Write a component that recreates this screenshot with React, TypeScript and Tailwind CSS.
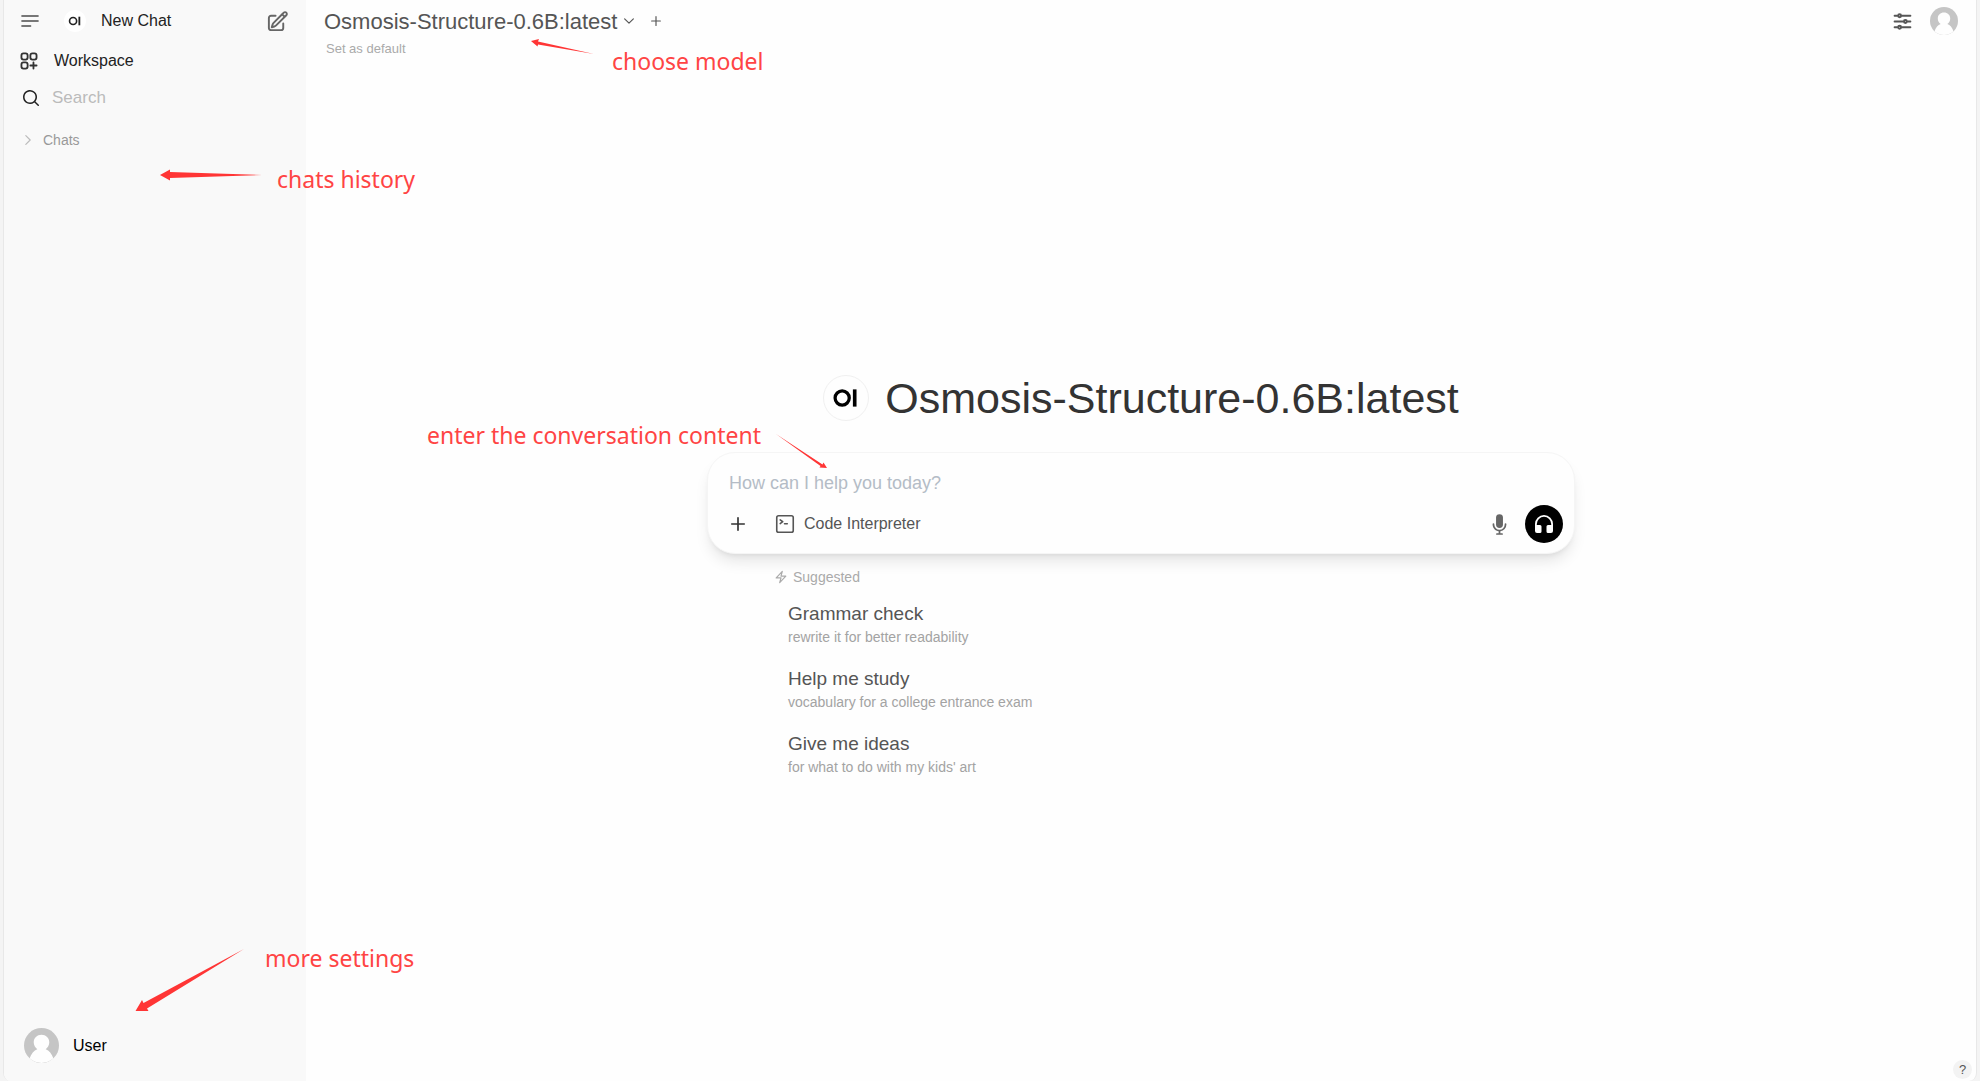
import React from 'react';

const suggestions = [
   { title: 'Grammar check', text: 'rewrite it for better readability' },
   { title: 'Help me study', text: 'vocabulary for a college entrance exam' },
   { title: 'Give me ideas', text: "for what to do with my kids' art" },
];

function Outline({ d, className, width = 2 }: { d: string; className: string; width?: number }) {
   return (
      <svg viewBox="0 0 24 24" fill="none" stroke="currentColor" strokeWidth={width} strokeLinecap="round" strokeLinejoin="round" className={className} aria-hidden="true">
         <path d={d} />
      </svg>
   );
}

function Logo({ className }: { className: string }) {
   return (
      <svg viewBox="0 0 46 46" className={className} aria-hidden="true">
         <circle cx="19" cy="23" r="7.4" fill="none" stroke="currentColor" strokeWidth="3.4" />
         <rect x="30.2" y="14" width="3.8" height="18" fill="currentColor" />
      </svg>
   );
}

function Avatar({ className }: { className: string }) {
   return (
      <svg viewBox="0 0 36 36" className={className} aria-hidden="true">
         <circle cx="18" cy="18" r="18" fill="#c5c5c5" />
         <path d="M18 7c4.500 0 8 3.300 8 7.700 0 3-1.500 5.600-3.700 7.100 3.500 1.200 6.300 4.600 7.900 9.400A18 18 0 0 1 18 36a18 18 0 0 1-12.200-4.800c1.600-4.800 4.400-8.200 7.900-9.400C11.500 20.300 10 17.700 10 14.700 10 10.300 13.500 7 18 7Z" fill="#fefefe" />
      </svg>
   );
}

function Sidebar() {
   return (
      <aside className="w-[302px] shrink-0 bg-[#f9f9f9] flex flex-col text-[#222]">
         <div className="flex items-center h-[42px] pl-4 pr-[17px]">
            <button aria-label="Toggle sidebar" className="text-[#777]">
               <Outline d="M2.500 6h19M2.500 12h19M2.500 18h10" width={2.25} className="w-[20px] h-[20px]" />
            </button>
            <a href="#new" className="flex flex-1 items-center ml-6 gap-[15px] text-[16px] font-medium">
               <span className="w-[22px] h-[22px] rounded-full bg-white"><Logo className="w-[22px] h-[22px]" /></span>
               New Chat
            </a>
            <button aria-label="New chat" className="text-[#666]">
               <Outline d="m16.862 4.487 1.687-1.688a1.875 1.875 0 1 1 2.652 2.652L10.582 16.070a4.500 4.500 0 0 1-1.897 1.130L6 18l.8-2.685a4.500 4.500 0 0 1 1.130-1.897l8.932-8.931Zm0 0L19.500 7.125M18 14v4.750A2.250 2.250 0 0 1 15.750 21H5.250A2.250 2.250 0 0 1 3 18.750V8.250A2.250 2.250 0 0 1 5.250 6H10" className="w-[23px] h-[23px]" />
            </button>
         </div>
         <a href="#workspace" className="flex items-center h-[38px] pl-[14px] gap-[14px] text-[16px] font-medium">
            <Outline d="M13.500 16.875h3.375m0 0h3.375m-3.375 0V13.500m0 3.375v3.375M6 10.500h2.250a2.250 2.250 0 0 0 2.250-2.250V6a2.250 2.250 0 0 0-2.250-2.250H6A2.250 2.250 0 0 0 3.750 6v2.250A2.250 2.250 0 0 0 6 10.500Zm0 9.750h2.250A2.250 2.250 0 0 0 10.500 18v-2.250a2.250 2.250 0 0 0-2.250-2.250H6a2.250 2.250 0 0 0-2.250 2.250V18A2.250 2.250 0 0 0 6 20.250Zm9.750-9.750H18a2.250 2.250 0 0 0 2.250-2.250V6A2.250 2.250 0 0 0 18 3.750h-2.250A2.250 2.250 0 0 0 13.500 6v2.250a2.250 2.250 0 0 0 2.250 2.250Z" className="w-[22px] h-[22px] text-[#333]" />
            Workspace
         </a>
         <label className="flex items-center h-[36px] pl-[17px] pr-4 gap-[11px]">
            <svg viewBox="0 0 20 20" fill="currentColor" className="w-[20px] h-[20px] shrink-0" aria-hidden="true">
               <path fillRule="evenodd" clipRule="evenodd" d="M9 3.500a5.500 5.500 0 1 0 0 11 5.500 5.500 0 0 0 0-11zM2 9a7 7 0 1 1 12.452 4.391l3.328 3.329a.75.75 0 1 1-1.060 1.060l-3.329-3.328A7 7 0 0 1 2 9z" />
            </svg>
            <input type="text" aria-label="Search" placeholder="Search" className="w-full min-w-0 bg-transparent outline-none text-[17px] placeholder:text-[#bbb]" />
         </label>
         <button className="flex items-center h-[32px] mt-2 pl-[17px] gap-2 text-[14px] font-medium text-[#999]">
            <Outline d="m8.250 4.500 7.500 7.500-7.500 7.500" className="w-[14px] h-[14px] text-[#bbb]" />
            Chats
         </button>
         <button className="flex items-center mt-auto mb-[18px] pl-5 gap-[14px] text-[16px] font-medium text-black">
            <Avatar className="w-[35px] h-[35px]" />
            User
         </button>
      </aside>
   );
}

function Header() {
   return (
      <header className="flex justify-between items-start h-[64px] px-[18px]">
         <div>
            <div className="flex items-center h-[42px] text-[#555]">
               <button className="flex items-center gap-[5px] text-[22px]">
                  Osmosis-Structure-0.6B:latest
                  <Outline d="m19.500 8.250-7.500 7.500-7.500-7.500" className="w-[14px] h-[14px]" />
               </button>
               <button aria-label="Add model" className="ml-[13px]"><Outline d="M12 4.500v15m7.500-7.500h-15" className="w-[14px] h-[14px]" /></button>
            </div>
            <button className="block pl-[2px] text-[13px] leading-[14px] text-[#aaa]">Set as default</button>
         </div>
         <div className="flex items-center gap-4 h-[42px]">
            <button aria-label="Controls" className="text-[#555]">
               <Outline d="M10.500 6h9.750M10.500 6a1.500 1.500 0 1 1-3 0m3 0a1.500 1.500 0 1 0-3 0M3.750 6H7.500m3 12h9.750m-9.750 0a1.500 1.500 0 0 1-3 0m3 0a1.500 1.500 0 0 0-3 0m-3.750 0H7.500m9-6h3.750m-3.750 0a1.500 1.500 0 0 1-3 0m3 0a1.500 1.500 0 0 0-3 0m-9.750 0h9.750" className="w-[23px] h-[23px]" />
            </button>
            <button aria-label="User menu"><Avatar className="w-[28px] h-[28px]" /></button>
         </div>
      </header>
   );
}

function Composer() {
   return (
      <form className="w-full rounded-[28px] border border-[#f5f5f5] bg-[#fefefe] shadow-lg px-[9px] pt-[16px] pb-[10px]">
         <input type="text" aria-label="Message" placeholder="How can I help you today?" className="block w-full px-3 bg-transparent outline-none text-[18px] leading-[28px] placeholder:text-[#b4bcc6]" />
         <div className="flex items-center h-[38px] mt-2">
            <button type="button" aria-label="More" className="ml-[11px] text-[#333]"><Outline d="M12 4.500v15M4.500 12h15" className="w-[20px] h-[20px]" /></button>
            <button type="button" className="flex items-center gap-2 ml-[26px] text-[16px] text-[#555]">
               <Outline d="M5 3h14a2 2 0 0 1 2 2v14a2 2 0 0 1-2 2H5a2 2 0 0 1-2-2V5a2 2 0 0 1 2-2ZM6.750 7.500 9.500 9.500 6.750 11.500M11.500 11.750h3" width={1.75} className="w-[22px] h-[22px]" />
               Code Interpreter
            </button>
            <button type="button" aria-label="Dictate" className="ml-auto text-[#666]">
               <svg viewBox="0 0 20 20" fill="currentColor" className="w-[23px] h-[23px]" aria-hidden="true">
                  <path d="M7 4a3 3 0 0 1 6 0v6a3 3 0 1 1-6 0V4z" />
                  <path d="M5.500 9.643a.75.75 0 0 0-1.500 0V10c0 3.060 2.290 5.585 5.250 5.954V17.500h-1.500a.75.75 0 0 0 0 1.500h4.500a.75.75 0 0 0 0-1.500h-1.500v-1.546A6.001 6.001 0 0 0 16 10v-.357a.75.75 0 0 0-1.500 0V10a4.500 4.500 0 0 1-9 0v-.357z" />
               </svg>
            </button>
            <button type="button" aria-label="Call" className="flex items-center justify-center w-[38px] h-[38px] ml-[14px] mr-[2px] rounded-full bg-black text-white">
               <svg viewBox="0 0 24 24" className="w-[24px] h-[24px]" aria-hidden="true">
                  <path d="M3.900 15v-3a8.100 8.100 0 0 1 16.200 0v3" fill="none" stroke="currentColor" strokeWidth="1.800" />
                  <path d="M3 13h5a1.500 1.500 0 0 1 1.500 1.500v5A1.500 1.500 0 0 1 8 21H5a2 2 0 0 1-2-2zM21 13h-5a1.500 1.500 0 0 0-1.500 1.500v5A1.500 1.500 0 0 0 16 21h3a2 2 0 0 0 2-2z" fill="currentColor" />
               </svg>
            </button>
         </div>
      </form>
   );
}

// Red callouts that explain the parts of the chat screen
function Callouts() {
   return (
      <div className="absolute inset-0 pointer-events-none text-[#ff4444] font-['Noto_Sans','Open_Sans',sans-serif] text-[23px] leading-[32px] whitespace-nowrap">
         <svg className="absolute inset-0 w-full h-full" fill="#ff3535" aria-hidden="true">
            <path d="M531 41l8-2-1 2.500L594 54l-56-9.500-.5 2z" />
            <path d="M160 175l10-5.500v2.500l92 3-92 3v2.500z" />
            <path d="M135.500 1011l6.500-11 1.500 3L244 949l-97 59.500 1.500 2.500z" />
            <path d="M776 434l46.500 30.500 1-2L827 468l-7.500-.5 1-1.500z" />
         </svg>
         <span className="absolute left-[612px] top-[45px]">choose model</span>
         <span className="absolute left-[277px] top-[163px]">chats history</span>
         <span className="absolute left-[427px] top-[419px]">enter the conversation content</span>
         <span className="absolute left-[265px] top-[942px]">more settings</span>
      </div>
   );
}

export default function App() {
   return (
      <div className="relative min-h-screen flex bg-[#f4f4f4] px-[3px] font-['Liberation_Sans',Arial,sans-serif]">
         <div className="relative flex flex-1 min-w-0 overflow-hidden rounded-b-lg border-x border-[#e8e8e8] bg-[#fefefe]">
            <Sidebar />
            <main className="flex-1 min-w-0 flex flex-col">
               <Header />
               <section className="flex-1 flex flex-col items-center justify-center pt-[22px]">
                  <div className="w-full max-w-[868px]">
                     <div className="flex items-center justify-center gap-4 mb-[30px]">
                        <span className="w-[46px] h-[46px] rounded-full border border-[#f0f0f0] text-black"><Logo className="w-full h-full" /></span>
                        <h1 className="text-[43px] leading-[48px] text-[#333]">Osmosis-Structure-0.6B:latest</h1>
                     </div>
                     <Composer />
                     <div className="px-[67px] pt-[13px]">
                        <div className="flex items-center gap-[5px] text-[14px] leading-[20px] font-medium text-[#aaa]">
                           <Outline d="m3.750 13.500 10.500-11.250L12 10.500h8.250L9.750 21.750 12 13.500H3.750Z" className="w-[14px] h-[14px]" />
                           Suggested
                        </div>
                        <div className="mt-[11px] flex flex-col items-start">
                           {suggestions.map((s) => (
                              <button key={s.title} className="h-[65px] px-[14px] pt-[3px] flex flex-col text-left">
                                 <span className="text-[19px] leading-[26px] font-medium text-[#555]">{s.title}</span>
                                 <span className="text-[14px] leading-[20px] text-[#a3a3a3]">{s.text}</span>
                              </button>
                           ))}
                        </div>
                     </div>
                  </div>
               </section>
            </main>
            <button aria-label="Help" className="absolute right-[4px] bottom-[2px] w-[19px] h-[19px] rounded-full bg-[#f3f3f3] text-[13px] leading-[19px] text-[#555]">?</button>
         </div>
         <Callouts />
      </div>
   );
}
